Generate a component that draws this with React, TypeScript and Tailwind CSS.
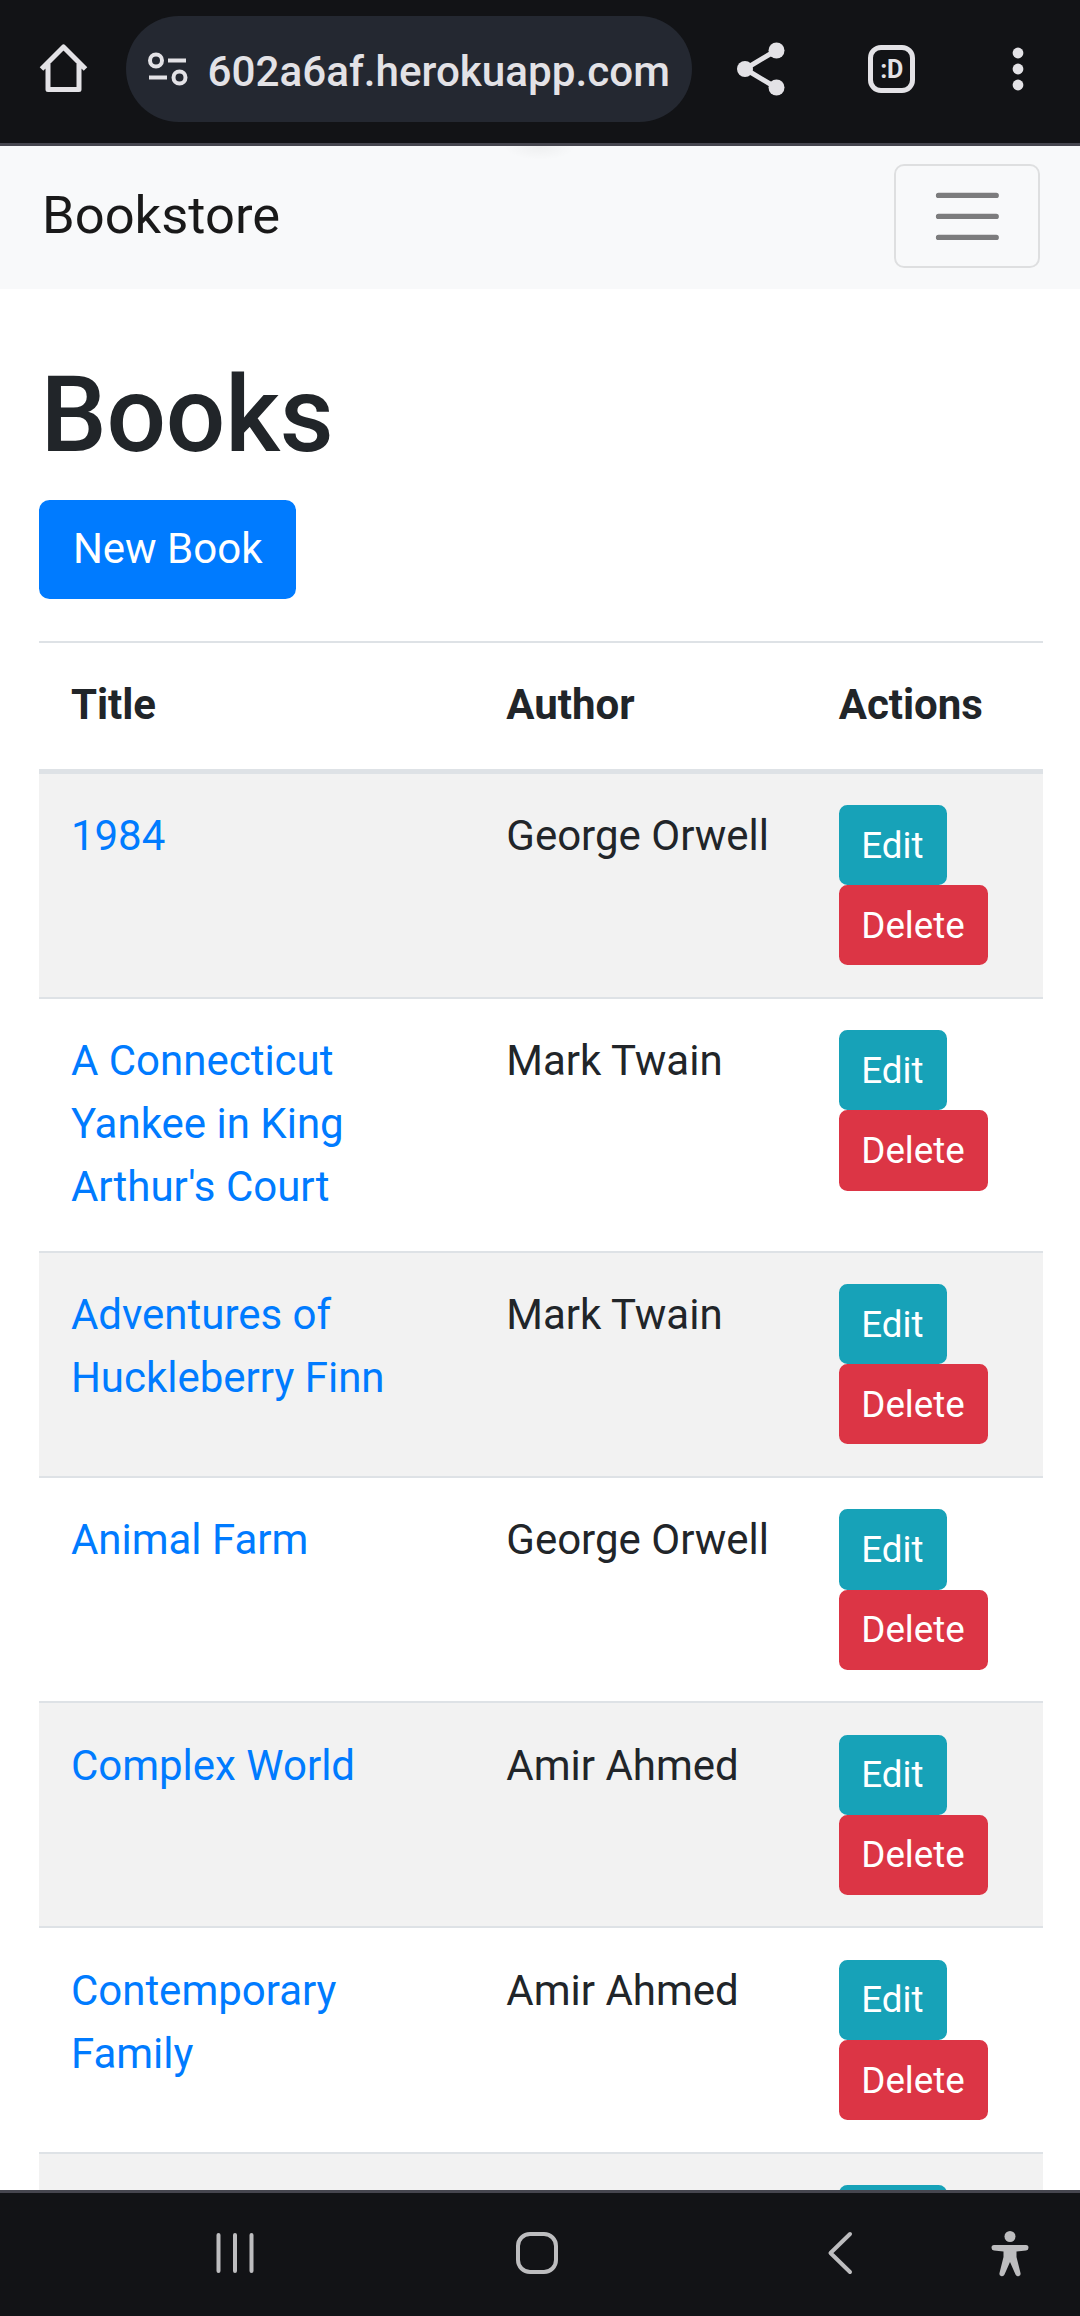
import React from "react";

type Book = { title: string; author: string };

const books: Book[] = [
  { title: "1984", author: "George Orwell" },
  { title: "A Connecticut Yankee in King Arthur's Court", author: "Mark Twain" },
  { title: "Adventures of Huckleberry Finn", author: "Mark Twain" },
  { title: "Animal Farm", author: "George Orwell" },
  { title: "Complex World", author: "Amir Ahmed" },
  { title: "Contemporary Family", author: "Amir Ahmed" },
];

const columns = "grid grid-cols-[435.4px_332.4px_1fr]";

function BrowserBar() {
  return (
    <header className="flex h-[146px] shrink-0 items-start border-b-[3px] border-[#46464f] bg-[#121316] pt-4 text-[#e3e2e6]">
      <div className="flex h-[106px] w-full items-center">
        <svg className="ml-[38px] h-[52px] w-[52px]" viewBox="0 0 52 52" fill="none" stroke="currentColor" strokeWidth="5" strokeLinejoin="round">
          <path d="M3.5 26 L25.5 4 L47.5 26 M10 21 V46.5 H41 V21" />
        </svg>
        <div className="ml-[36px] flex h-[106px] w-[566px] items-center rounded-full bg-[#242831]">
          <svg className="ml-[21px] h-[40px] w-[42px]" viewBox="0 0 42 40" fill="none" stroke="currentColor" strokeWidth="4">
            <circle cx="9" cy="11.5" r="6" />
            <path d="M21 11.5 H39 M2 28.5 H20" />
            <circle cx="32.500" cy="28.500" r="6" />
          </svg>
          <span className="ml-[18.500px] mt-[6px] whitespace-nowrap text-[42.200px] font-medium leading-none">602a6af.herokuapp.com</span>
        </div>
        <svg className="ml-[45px] h-[56px] w-[48px]" viewBox="0 0 48 56" fill="currentColor">
          <path d="M39 9.500 L8 28 L39 46.500" fill="none" stroke="currentColor" strokeWidth="5" />
          <circle cx="39.500" cy="9.500" r="8" />
          <circle cx="8" cy="28" r="8" />
          <circle cx="39.500" cy="46.500" r="8" />
        </svg>
        <div className="ml-[83px] flex h-[48px] w-[47px] items-center justify-center rounded-[13px] border-[5px] border-current text-[25px] font-bold leading-none tracking-[-0.500px]">
          :D
        </div>
        <svg className="ml-[96.500px] h-[44px] w-[12px]" viewBox="0 0 12 44" fill="currentColor">
          <circle cx="6" cy="6" r="5.400" />
          <circle cx="6" cy="22" r="5.400" />
          <circle cx="6" cy="38" r="5.400" />
        </svg>
      </div>
    </header>
  );
}

function Navbar() {
  return (
    <nav className="flex h-[143px] shrink-0 items-start justify-between bg-[#f8f9fa] bg-[radial-gradient(ellipse_36px_14px_at_540px_0px,rgba(0,0,0,0.04),transparent)] pl-[42px] pr-[40px] pt-[18px]">
      <a className="pt-[12px] text-[52.500px] leading-[78.750px] text-black/90">Bookstore</a>
      <button className="flex h-[103.750px] w-[145.750px] items-center justify-center rounded-[10px] border-2 border-black/10">
        <svg className="h-[78.750px] w-[78.750px]" viewBox="0 0 30 30">
          <path stroke="rgba(0,0,0,0.5)" strokeWidth="2" strokeLinecap="round" strokeMiterlimit="10" d="M4 7h22M4 15h22M4 23h22" />
        </svg>
      </button>
    </nav>
  );
}

function BookRow({ book, index }: { book: Book; index: number }) {
  return (
    <div
      className={`${columns} ${index % 2 === 0 ? "bg-[#f2f2f2]" : ""} ${index > 0 ? "border-t-2 border-[#dee2e6]" : ""}`}
    >
      <div className="px-[31.500px] pt-[30.400px] pb-[32.600px] text-[#007bff]">{book.title}</div>
      <div className="whitespace-nowrap px-[31.500px] pt-[30.400px]">{book.author}</div>
      <div className="flex flex-col items-start px-[31.500px] py-[31.500px] text-[36.750px] leading-[55.125px] text-white">
        <button className="rounded-[8.400px] border-2 border-[#17a2b8] bg-[#17a2b8] pl-[20.600px] pr-[21.400px] py-[10.500px]">Edit</button>
        <button className="rounded-[8.400px] border-2 border-[#dc3545] bg-[#dc3545] pl-[20.600px] pr-[21.400px] py-[10.500px]">Delete</button>
      </div>
    </div>
  );
}

function NavigationBar() {
  return (
    <footer className="flex h-[126px] shrink-0 items-start border-t-[3px] border-[#46464f] bg-[#121316] pt-[38px] text-[#bdbdbf]">
      <svg className="ml-[214px] h-[44px] w-[42px]" viewBox="0 0 42 44" stroke="currentColor" strokeWidth="4" strokeLinecap="round">
        <path d="M4.500 4 V40 M21 4 V40 M37.500 4 V40" />
      </svg>
      <svg className="ml-[259px] h-[44px] w-[44px]" viewBox="0 0 44 44" fill="none" stroke="currentColor" strokeWidth="4">
        <rect x="3" y="3" width="38" height="38" rx="12" />
      </svg>
      <svg className="ml-[267px] h-[44px] w-[28px]" viewBox="0 0 28 44" fill="none" stroke="currentColor" strokeWidth="4" strokeLinecap="round" strokeLinejoin="round">
        <path d="M24 3 L4.500 22 L24 41" />
      </svg>
      <svg className="ml-[137px] h-[46px] w-[38px]" viewBox="0 0 38 46" fill="currentColor">
        <circle cx="19" cy="5.500" r="5.500" />
        <path d="M3 14 H35 Q37.500 14 37.500 16.800 Q37.500 19.300 35 19.500 L25.500 20.500 V26 L29.500 42 Q30 44.500 28 45 Q25.500 45.700 24.500 43.500 L19 31 L13.500 43.500 Q12.500 45.700 10 45 Q8 44.500 8.500 42 L12.500 26 V20.500 L3 19.500 Q0.500 19.300 0.500 16.800 Q0.500 14 3 14 Z" />
      </svg>
    </footer>
  );
}

export default function App() {
  return (
    <div className="flex h-[2316px] w-[1080px] flex-col overflow-hidden bg-white font-[Roboto,sans-serif] text-[42px] leading-[63px] text-[#212529]">
      <BrowserBar />
      <Navbar />
      <main className="min-h-0 flex-1 overflow-hidden pl-[39.400px] pr-[37.500px] pt-[64px]">
        <h1 className="pl-px text-[105px] font-medium leading-[126px] tracking-[-0.200px]">Books</h1>
        <button className="mt-[21px] block rounded-[10.500px] border-2 border-[#007bff] bg-[#007bff] px-[31.500px] pb-[17px] pt-[14.500px] text-white">
          New Book
        </button>
        <div className="mt-[42px]">
          <div className={`${columns} border-b-[5px] border-t-2 border-[#dee2e6] font-bold`}>
            <div className="px-[31.500px] pb-[33px] pt-[30px]">Title</div>
            <div className="px-[31.500px] pb-[33px] pt-[30px]">Author</div>
            <div className="px-[31.500px] pb-[33px] pt-[30px]">Actions</div>
          </div>
          {books.map((book, index) => (
            <BookRow key={index} book={book} index={index} />
          ))}
          <div className={`${columns} h-[60px] border-t-2 border-[#dee2e6] bg-[#f2f2f2]`}>
            <div className="col-start-3 px-[31.500px] pt-[31.500px]">
              <div className="h-[28px] w-[108px] rounded-t-[8.400px] bg-[#17a2b8]" />
            </div>
          </div>
        </div>
      </main>
      <NavigationBar />
    </div>
  );
}
